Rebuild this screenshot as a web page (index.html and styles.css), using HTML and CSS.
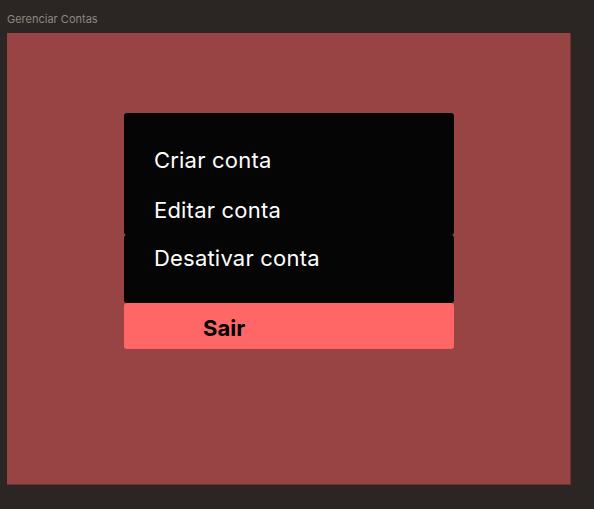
FILE: index.html
```html
<!DOCTYPE html>
<html lang="pt">
<head>
<meta charset="utf-8">
<link rel="stylesheet" href="styles.css">
</head>
<body>
<div class="title">Gerenciar Contas</div>
<div class="frame">
  <div class="menu">
    <div class="box box-top">
      <div class="item">Criar conta</div>
      <div class="item">Editar conta</div>
    </div>
    <div class="box box-bottom">
      <div class="item item-last">Desativar conta</div>
    </div>
    <button class="exit">Sair</button>
  </div>
</div>
</body>
</html>
```
FILE: styles.css
```css
html, body {
  margin: 0;
  padding: 0;
  background: #2b2623;
  width: 594px;
  height: 509px;
  overflow: hidden;
  font-family: Inter, "Liberation Sans", sans-serif;
}
.title {
  height: 33px;
  box-sizing: border-box;
  padding: 12px 0 0 7px;
  font-size: 11px;
  line-height: 14px;
  color: #8b8682;
}
.frame {
  margin-left: 7px;
  width: 564px;
  height: 452px;
  box-sizing: border-box;
  background: #994444;
  border-right: 1px solid #6e3030;
  border-bottom: 1px solid #6e3030;
  padding: 80px 0 0 117px;
}
.menu {
  width: 330px;
  display: flex;
  flex-direction: column;
}
.box {
  background: #050505;
  border-radius: 3px;
  color: #ffffff;
}
.box-top {
  padding: 22px 0 0 30px;
  height: 122px;
  box-sizing: border-box;
}
.box-bottom {
  padding: 0 0 0 30px;
  height: 68px;
  box-sizing: border-box;
}
.item {
  font-size: 22px;
  letter-spacing: 0.2px;
  line-height: 50px;
}
.item-last {
  line-height: 46px;
}
.exit {
  margin: 0;
  border: none;
  border-radius: 3px;
  background: #ff6666;
  height: 46px;
  text-align: left;
  padding: 4px 0 0 79px;
  box-sizing: border-box;
  font-family: Inter, "Liberation Sans", sans-serif;
  font-size: 22px;
  font-weight: 700;
  color: #000000;
  line-height: 42px;
}
```
